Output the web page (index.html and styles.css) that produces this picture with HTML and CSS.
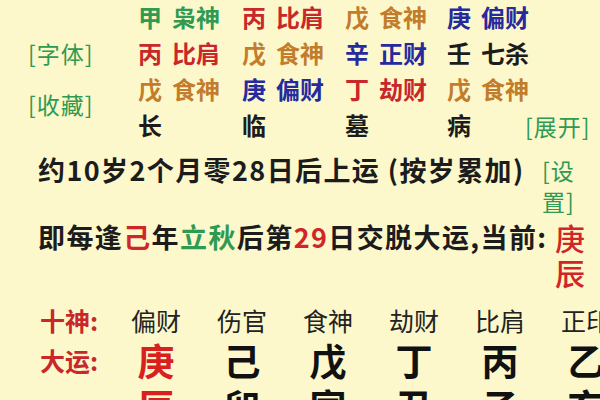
FILE: index.html
```html
<!DOCTYPE html>
<html lang="zh">
<head>
<meta charset="utf-8">
<link rel="stylesheet" href="styles.css">
</head>
<body>
<div class="page">
  <div class="top">
    <div class="side">
      <span class="link l1">[字体]</span>
      <span class="link l2">[收藏]</span>
    </div>
    <div class="grid">
      <div class="cell g"><span class="stem">甲</span><span>枭神</span></div>
      <div class="cell r"><span class="stem">丙</span><span>比肩</span></div>
      <div class="cell o"><span class="stem">戊</span><span>食神</span></div>
      <div class="cell b"><span class="stem">庚</span><span>偏财</span></div>

      <div class="cell r"><span class="stem">丙</span><span>比肩</span></div>
      <div class="cell o"><span class="stem">戊</span><span>食神</span></div>
      <div class="cell b"><span class="stem">辛</span><span>正财</span></div>
      <div class="cell k"><span class="stem">壬</span><span>七杀</span></div>

      <div class="cell o"><span class="stem">戊</span><span>食神</span></div>
      <div class="cell b"><span class="stem">庚</span><span>偏财</span></div>
      <div class="cell r"><span class="stem">丁</span><span>劫财</span></div>
      <div class="cell o"><span class="stem">戊</span><span>食神</span></div>

      <div class="cell k"><span class="stem">长</span></div>
      <div class="cell k"><span class="stem">临</span></div>
      <div class="cell k"><span class="stem">墓</span></div>
      <div class="cell k"><span class="stem">病</span></div>
    </div>
    <div class="side-r">
      <span class="link">[展开]</span>
    </div>
  </div>

  <div class="line line1">
    <div class="text">约10岁2个月零28日后上运 (按岁累加)</div>
    <div class="link set">[设置]</div>
  </div>

  <div class="line line2">
    <div class="text">即每逢<span class="red">己</span>年<span class="green">立秋</span>后第<span class="red">29</span>日交脱大运,当前:</div>
    <div class="cur">庚<br>辰</div>
  </div>

  <div class="table">
    <div class="lab">十神:</div>
    <div class="hd">偏财</div>
    <div class="hd">伤官</div>
    <div class="hd">食神</div>
    <div class="hd">劫财</div>
    <div class="hd">比肩</div>
    <div class="hd">正印</div>

    <div class="lab lab2">大运:</div>
    <div class="dy red">庚</div>
    <div class="dy">己</div>
    <div class="dy">戊</div>
    <div class="dy">丁</div>
    <div class="dy">丙</div>
    <div class="dy">乙</div>

    <div class="lab"></div>
    <div class="dy red">辰</div>
    <div class="dy">卯</div>
    <div class="dy">寅</div>
    <div class="dy">丑</div>
    <div class="dy">子</div>
    <div class="dy">亥</div>
  </div>
</div>
</body>
</html>
```

FILE: styles.css
```css
html, body {
  margin: 0;
  padding: 0;
  background: #fcf8cb;
  overflow: hidden;
}

body {
  width: 600px;
  height: 400px;
  font-family: "Noto Sans CJK SC", "Noto Sans", sans-serif;
  color: #1c1c1c;
}

.page {
  width: 600px;
  height: 400px;
  overflow: hidden;
}

.link {
  color: #2f9a52;
  font-size: 23px;
  letter-spacing: 1px;
  white-space: nowrap;
}

.top {
  display: flex;
  height: 144px;
}

.side {
  flex: none;
  width: 110px;
  padding-left: 28px;
  display: flex;
  flex-direction: column;
}

.side .l1 {
  margin-top: 35px;
  line-height: 36px;
}

.side .l2 {
  margin-top: 15px;
  line-height: 36px;
}

.grid {
  flex: none;
  display: grid;
  grid-template-columns: 104px 103px 102px 78px;
  grid-auto-rows: 36px;
  font-size: 24px;
  font-weight: 700;
  line-height: 36px;
  margin-top: -1px;
}

.cell {
  display: flex;
  gap: 10px;
  white-space: nowrap;
}

.side-r {
  flex: none;
  display: flex;
  align-items: flex-end;
}

.side-r .link {
  line-height: 36px;
}

.g { color: #2f9a52; }
.r { color: #c8272b; }
.o { color: #c27c2c; }
.b { color: #262a9e; }
.k { color: #1c1c1c; }

.red { color: #d0262a; }
.green { color: #2f9a52; }

.line {
  display: grid;
  padding-left: 38px;
  align-items: start;
}

.line .text {
  font-size: 27px;
  font-weight: 700;
  letter-spacing: 1.4px;
  line-height: 36px;
  white-space: nowrap;
}

.line1 {
  margin-top: 8px;
  grid-template-columns: 504px 44px;
  height: 62px;
}

.set {
  line-height: 31px;
  margin-top: 3px;
  white-space: normal;
  word-break: break-all;
}

.line2 {
  margin-top: 5px;
  grid-template-columns: 517px 40px;
  height: 70px;
}

.cur {
  color: #d0262a;
  font-size: 30px;
  font-weight: 500;
  line-height: 35px;
  margin-top: 1px;
}

.table {
  margin-top: 14px;
  display: grid;
  grid-template-columns: 73px repeat(6, 86px);
  grid-template-rows: 34px 46px 46px;
  padding-left: 40px;
  width: 700px;
}

.lab {
  color: #c8272b;
  font-size: 25px;
  font-weight: 700;
  line-height: 34px;
}

.lab2 {
  line-height: 46px;
}

.hd {
  text-align: center;
  font-size: 25px;
  line-height: 34px;
  color: #222;
}

.dy {
  text-align: center;
  font-size: 37px;
  font-weight: 700;
  line-height: 46px;
  color: #111;
}

.dy.red {
  color: #d8201f;
}
```
